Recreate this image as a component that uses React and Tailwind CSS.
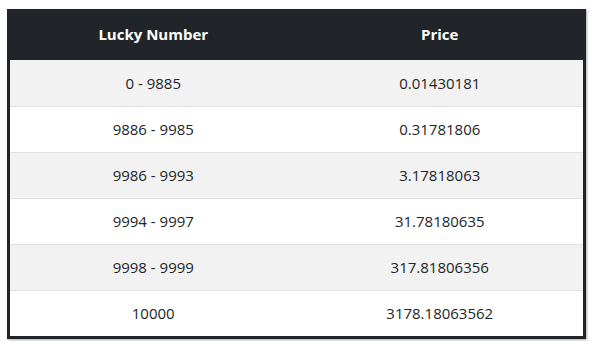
const rows = [
  ["0 - 9885", "0.01430181"],
  ["9886 - 9985", "0.31781806"],
  ["9986 - 9993", "3.17818063"],
  ["9994 - 9997", "31.78180635"],
  ["9998 - 9999", "317.81806356"],
  ["10000", "3178.18063562"],
];

export default function App() {
  return (
    <div className="w-[598px] h-[350px] bg-white pt-[9px] pl-[7px] font-['Open_Sans',sans-serif] text-[15px] text-[#212529]">
      <div className="w-[579px] border-[3px] border-t-0 border-[#212529] shadow-[1px_1px_2px_rgba(0,0,0,0.35)]">
        <table className="w-full table-fixed border-collapse">
          <thead>
            <tr className="bg-[#212529] text-white h-[51px]">
              <th className="font-bold">Lucky Number</th>
              <th className="font-bold">Price</th>
            </tr>
          </thead>
          <tbody>
            {rows.map(([num, price], i) => (
              <tr
                key={num}
                className={`h-[46px] ${i % 2 === 0 ? "bg-[#f2f2f2]" : "bg-white"} ${i > 0 ? "border-t border-[#dee2e6]" : ""}`}
              >
                <td className="text-center">{num}</td>
                <td className="text-center">{price}</td>
              </tr>
            ))}
          </tbody>
        </table>
      </div>
    </div>
  );
}
